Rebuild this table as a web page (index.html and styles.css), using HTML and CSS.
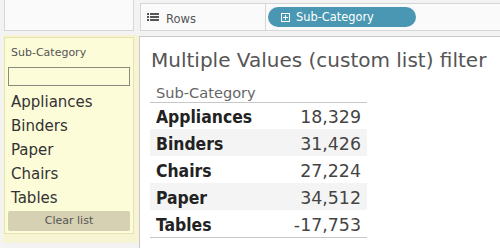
FILE: index.html
```html
<!DOCTYPE html>
<html lang="en">
<head>
<meta charset="utf-8">
<title>Multiple Values (custom list) filter</title>
<link rel="stylesheet" href="styles.css">
</head>
<body>
<div class="top">
  <div class="corner"></div>
  <div class="shelf">
    <div class="shelf-label">
      <svg class="rows-icon" width="12" height="8" viewBox="0 0 12 8">
        <rect x="0" y="0" width="2" height="2" fill="#555"/>
        <rect x="3" y="0" width="9" height="2" fill="#555"/>
        <rect x="0" y="3" width="2" height="2" fill="#555"/>
        <rect x="3" y="3" width="9" height="2" fill="#555"/>
        <rect x="0" y="6" width="2" height="2" fill="#555"/>
        <rect x="3" y="6" width="9" height="2" fill="#555"/>
      </svg>
      <span class="shelf-text">Rows</span>
    </div>
    <div class="pill">
      <svg class="pill-icon" width="9" height="9" viewBox="0 0 9 9">
        <rect x="0.5" y="0.5" width="8" height="8" fill="none" stroke="#fff" stroke-width="1"/>
        <rect x="2" y="4" width="5" height="1" fill="#fff"/>
        <rect x="4" y="2" width="1" height="5" fill="#fff"/>
      </svg>
      <span>Sub-Category</span>
    </div>
  </div>
</div>
<div class="main">
  <div class="filter-outer">
    <div class="filter">
      <div class="filter-label">Sub-Category</div>
      <div class="filter-input"></div>
      <ul class="filter-list">
        <li>Appliances</li>
        <li>Binders</li>
        <li>Paper</li>
        <li>Chairs</li>
        <li>Tables</li>
      </ul>
      <div class="clear-btn">Clear list</div>
    </div>
  </div>
  <div class="sheet">
    <div class="title">Multiple Values (custom list) filter</div>
    <div class="data">
      <div class="head">Sub-Category</div>
      <div class="row first"><span class="name">Appliances</span><span class="val">18,329</span></div>
      <div class="row alt"><span class="name">Binders</span><span class="val">31,426</span></div>
      <div class="row"><span class="name">Chairs</span><span class="val">27,224</span></div>
      <div class="row alt"><span class="name">Paper</span><span class="val">34,512</span></div>
      <div class="row last"><span class="name">Tables</span><span class="val">-17,753</span></div>
    </div>
  </div>
</div>
</body>
</html>
```

FILE: styles.css
```css
* { box-sizing: border-box; }
html, body { margin: 0; padding: 0; }
body {
  width: 500px;
  height: 248px;
  overflow: hidden;
  background: #f3f3f3;
  font-family: "DejaVu Sans", "Liberation Sans", sans-serif;
  color: #333;
}
.top {
  display: flex;
  align-items: flex-start;
  height: 35px;
}
.corner {
  margin-left: 4px;
  margin-top: -1px;
  width: 130px;
  height: 32px;
  background: #fafafa;
  border: 1px solid #d6d6d6;
}
.shelf {
  flex: 1;
  display: flex;
  align-items: flex-start;
  margin-left: 6px;
  margin-right: -4px;
  margin-top: 3px;
  height: 28px;
  background: #fafafa;
  border: 1px solid #d6d6d6;
}
.shelf-label {
  width: 125px;
  height: 26px;
  border-right: 1px solid #d6d6d6;
  display: flex;
  align-items: center;
  padding-left: 6px;
  padding-top: 3px;
}
.rows-icon { margin-top: -3px; }
.shelf-text {
  margin-left: 7px;
  font-size: 11.5px;
  color: #555;
}
.pill {
  margin-left: 2px;
  margin-top: 3px;
  width: 148px;
  height: 20px;
  border-radius: 10px;
  background: #4a97b3;
  color: #fff;
  font-size: 11.4px;
  display: flex;
  align-items: center;
  padding-left: 13px;
}
.pill-icon { margin-right: 6px; }
.main {
  display: flex;
  align-items: flex-start;
}
.filter-outer {
  margin-left: 3px;
  width: 136px;
  height: 208px;
  background: #f6f4d3;
  padding: 2px 0 0 1px;
}
.filter {
  width: 130px;
  height: 197px;
  background: #fdfcd9;
  border: 1px solid #e6e2b3;
  padding: 0 3px;
}
.filter-label {
  font-size: 11px;
  line-height: 16px;
  color: #555;
  padding-left: 3px;
  margin-top: 7px;
}
.filter-input {
  margin-top: 6px;
  height: 19px;
  border: 1px solid #8a8a80;
  background: #fdfcd9;
}
.filter-list {
  list-style: none;
  margin: 4px 0 0;
  padding: 0 0 0 3px;
  font-size: 15px;
  line-height: 24px;
  color: #333;
}
.clear-btn {
  margin-top: 1px;
  height: 20px;
  background: #d5d1b2;
  border-radius: 2px;
  text-align: center;
  font-size: 11px;
  line-height: 20px;
  color: #555;
}
.sheet {
  flex: 1;
  margin-top: 1px;
  height: 214px;
  background: #fff;
  border-left: 1px solid #c8c8c8;
  border-top: 1px solid #c8c8c8;
  padding-left: 10px;
}
.title {
  font-size: 20px;
  line-height: 24px;
  color: #555;
  margin-top: 11px;
  padding-left: 1px;
  white-space: nowrap;
}
.data {
  margin-top: 7px;
  width: 217px;
}
.head {
  font-size: 14.6px;
  line-height: 17px;
  color: #666;
  padding: 5px 0 1px 6px;
  border-bottom: 1px solid #c8c8c8;
}
.row {
  display: flex;
  justify-content: space-between;
  align-items: center;
  height: 27px;
  padding: 2px 6px 0;
  font-size: 17.4px;
}
.row.first { height: 26px; }
.row.last { border-bottom: 1px solid #c8c8c8; height: 28px; }
.row.alt { background: #f4f4f4; }
.name {
  font-family: "DejaVu Sans Condensed", "DejaVu Sans", sans-serif;
  font-stretch: condensed;
  font-weight: 700;
  color: #222;
}
.val { color: #444; }
```
